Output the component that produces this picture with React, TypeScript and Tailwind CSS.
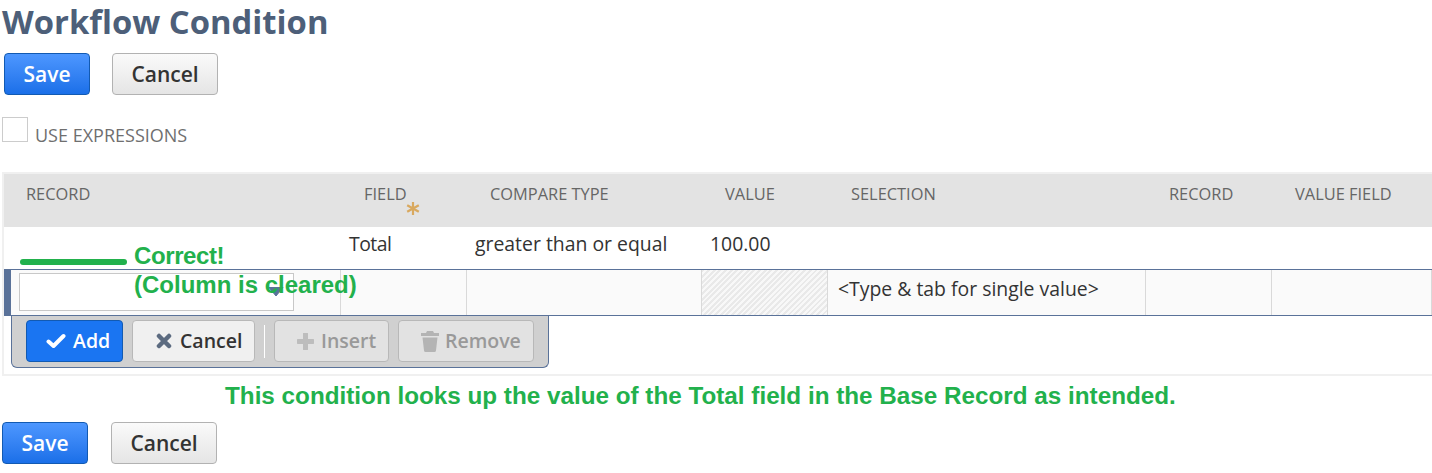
const ui = { fontFamily: '"Open Sans", sans-serif' };
const note = { fontFamily: '"Liberation Sans", Arial, sans-serif' };

function SaveButton() {
  return (
    <button className="h-[42px] w-[86px] rounded-[4px] border border-[#125ab2] bg-gradient-to-b from-[#4d97ff] to-[#1a6fe8] pt-[1px] text-[21px] font-semibold text-white">
      Save
    </button>
  );
}

function CancelButton() {
  return (
    <button className="h-[42px] w-[106px] rounded-[4px] border border-[#b2b2b2] bg-gradient-to-b from-[#fafafa] to-[#e5e5e5] pt-[1px] text-[21px] font-semibold text-[#333333]">
      Cancel
    </button>
  );
}

const headers = [
  { label: 'RECORD', w: 'w-[338px]', pad: 'pl-[22px]' },
  { label: 'FIELD', w: 'w-[126px]', pad: 'pl-[22px]' },
  { label: 'COMPARE TYPE', w: 'w-[235px]', pad: 'pl-[22px]' },
  { label: 'VALUE', w: 'w-[126px]', pad: 'pl-[22px]' },
  { label: 'SELECTION', w: 'w-[318px]', pad: 'pl-[22px]' },
  { label: 'RECORD', w: 'w-[126px]', pad: 'pl-[22px]' },
  { label: 'VALUE FIELD', w: 'flex-1', pad: 'pl-[22px]' },
];

export default function App() {
  return (
    <div className="relative h-[473px] w-[1432px] overflow-hidden bg-white text-[#333333]" style={ui}>
      <h1 className="pl-[2px] pt-[1px] text-[32.8px] font-bold leading-[42px] text-[#4d5f79]">Workflow Condition</h1>

      <div className="mt-[10px] flex gap-[22px] pl-[4px]">
        <SaveButton />
        <CancelButton />
      </div>

      <div className="mt-[22px] flex pl-[2px]">
        <div className="h-[25px] w-[26px] border border-[#cccccc] bg-white" />
        <span className="ml-[7px] mt-[6px] text-[18px] leading-[24px] text-[#6f6f6f]">USE EXPRESSIONS</span>
      </div>

      <div className="ml-[2px] mt-[25px] h-[204px] border-b-2 border-l-2 border-t-2 border-[#f0f0f0]">
        <div className="flex h-[53px] bg-[#e3e3e3] pt-[9px] text-[16.4px] leading-[22px] text-[#666666]">
          {headers.map((h) => (
            <div key={h.label + h.w} className={`${h.w} ${h.pad} relative shrink-0`}>
              {h.label}
              {h.label === 'FIELD' && (
                <svg className="absolute left-[64px] top-[18px]" width="14" height="15" viewBox="0 0 14 15">
                  <path d="M7 1v13M1.2 4.2l11.6 6.6M12.8 4.2L1.2 10.8" stroke="#d9a95f" strokeWidth="2.2" />
                </svg>
              )}
            </div>
          ))}
        </div>

        <div className="flex h-[42px] pt-[4px] text-[19.4px] leading-[26px]">
          <div className="w-[345px]" />
          <div className="w-[126px] tracking-[-0.5px]">Total</div>
          <div className="w-[235px]">greater than or equal</div>
          <div>100.00</div>
        </div>

        {/* edit row */}
        <div className="flex h-[47px] border-y border-[#5a7299] bg-[#fafafa]">
          <div className="-my-px w-[7px] shrink-0 bg-[#5a7299]" />
          <div className="relative flex w-[330px] shrink-0 items-center border-r border-[#d9d9d9] pb-[2px] pl-[8px]">
            <div className="h-[38px] w-[275px] border border-[#c8c8c8] bg-white" />
            <svg className="absolute left-[257px] top-[15px]" width="16" height="12" viewBox="0 0 16 12">
              <path d="M1 2.5h14L8 11z" fill="#5a7299" stroke="#5a7299" strokeLinejoin="round" />
            </svg>
          </div>
          <div className="w-[126px] shrink-0 border-r border-[#d9d9d9]" />
          <div className="w-[235px] shrink-0 border-r border-[#d9d9d9]" />
          <div className="w-[126px] shrink-0 border-r border-[#d9d9d9] bg-[repeating-linear-gradient(135deg,#e9e9e9_0px,#e9e9e9_2px,#f8f8f8_2px,#f8f8f8_4px)]" />
          <div className="flex w-[318px] shrink-0 items-center border-r border-[#d9d9d9] pb-[8px] pl-[10px] text-[19.4px]">
            {'<Type & tab for single value>'}
          </div>
          <div className="w-[126px] shrink-0 border-r border-[#d9d9d9]" />
          <div className="flex-1 border-r border-[#d9d9d9]" />
        </div>

        {/* row actions */}
        <div className="ml-[7px] flex h-[52px] w-[538px] items-center rounded-b-[6px] border border-t-0 border-[#5a7299] bg-[#d0d0d0] pb-[1px] pl-[14px] text-[19.5px] font-semibold">
          <button className="flex h-[42px] w-[97px] items-center gap-[7px] rounded-[4px] border border-[#125ab2] bg-[#1a75f2] pl-[19px] text-white">
            <svg width="20" height="16" viewBox="0 0 20 16">
              <path d="M2.500 8.500L7.500 13L17.500 3" fill="none" stroke="#ffffff" strokeWidth="4" strokeLinecap="round" strokeLinejoin="round" />
            </svg>
            Add
          </button>
          <button className="ml-[9px] flex h-[42px] w-[123px] items-center gap-[8px] rounded-[4px] border border-[#b8b8b8] bg-[#f0f0f0] pl-[23px]">
            <svg width="16" height="16" viewBox="0 0 16 16">
              <path d="M3 3L13 13M13 3L3 13" fill="none" stroke="#5c6b80" strokeWidth="4.5" strokeLinecap="round" />
            </svg>
            Cancel
          </button>
          <div className="ml-[9px] h-[33px] w-px bg-white" />
          <button className="ml-[9px] flex h-[42px] w-[115px] items-center gap-[7px] rounded-[4px] border border-[#b8b8b8] bg-[#e2e2e2] pl-[22px] text-[#999999]">
            <svg width="17" height="17" viewBox="0 0 17 17">
              <path d="M8.500 1v15M1 8.500h15" fill="none" stroke="#bdbdbd" strokeWidth="5" strokeLinecap="round" />
            </svg>
            Insert
          </button>
          <button className="ml-[9px] flex h-[42px] w-[136px] items-center gap-[6px] rounded-[4px] border border-[#b8b8b8] bg-[#e2e2e2] pl-[22px] text-[#999999]">
            <svg width="18" height="21" viewBox="0 0 18 21">
              <path d="M6 0h6l1 2h5v3H0V2h5zM1.500 6.500h15L15 19.500q-.2 1.500-1.500 1.500h-9Q3.200 21 3 19.500z" fill="#b4b4b4" />
            </svg>
            Remove
          </button>
        </div>
      </div>

      <div className="absolute left-[225px] top-[382px] text-[24.25px] font-bold leading-[28px] text-[#22b14c]" style={note}>
        This condition looks up the value of the Total field in the Base Record as intended.
      </div>

      <div className="absolute left-[20px] top-[259px] h-[6px] w-[107px] rounded-full bg-[#22b14c]" />
      <div className="absolute left-[134px] top-[241px] text-[24px] font-bold leading-[29px] text-[#22b14c]" style={note}>
        <span className="tracking-[-0.4px]">Correct!</span>
        <br />
        (Column is cleared)
      </div>

      <div className="mt-[46px] flex gap-[23px] pl-[2px]">
        <SaveButton />
        <CancelButton />
      </div>
    </div>
  );
}
